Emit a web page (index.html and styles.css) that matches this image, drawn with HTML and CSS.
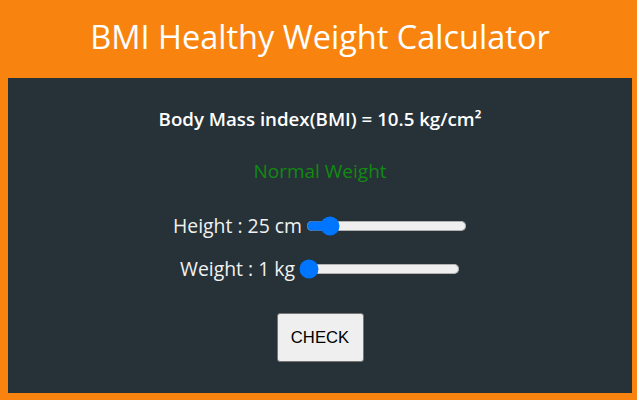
FILE: index.html
```html
<!DOCTYPE html>
<html>
<head>
<meta charset="utf-8">
<link rel="stylesheet" href="styles.css">
</head>
<body>
<div class="app">
  <header class="header">
    <h1 class="title">BMI Healthy Weight Calculator</h1>
  </header>
  <main class="panel">
    <p class="result">Body Mass index(BMI) = 10.5 kg/cm²</p>
    <p class="status">Normal Weight</p>
    <div class="row">
      <label class="label" for="h">Height : 25 cm</label>
      <input class="slider" id="h" type="range" min="0" max="250" value="25">
    </div>
    <div class="row">
      <label class="label" for="w">Weight : 1 kg</label>
      <input class="slider" id="w" type="range" min="0" max="200" value="1">
    </div>
    <button class="check">CHECK</button>
  </main>
</div>
</body>
</html>
```
FILE: styles.css
```css
html, body {
  margin: 0;
  padding: 0;
  background: #ffffff;
}
.app {
  width: 637px;
  height: 400px;
  box-sizing: border-box;
  background: #f8840f;
  padding: 0 5px 7px 8px;
  display: flex;
  flex-direction: column;
  font-family: "Open Sans", sans-serif;
}
.header {
  height: 78px;
  display: flex;
  align-items: center;
  justify-content: center;
}
.title {
  margin: 0;
  color: #ffffff;
  font-weight: 400;
  font-size: 32.5px;
  line-height: 1;
  padding-bottom: 4px;
}
.panel {
  flex: 1;
  background: #263238;
  display: flex;
  flex-direction: column;
  align-items: center;
  padding-top: 28px;
}
.result {
  margin: 0;
  color: #ffffff;
  font-weight: 600;
  font-size: 18.7px;
  line-height: 26px;
}
.status {
  margin: 26px 0 0;
  color: #118a11;
  font-size: 19px;
  line-height: 26px;
}
.row {
  display: flex;
  align-items: center;
  margin-top: 29px;
}
.row + .row {
  margin-top: 17px;
}
.label {
  color: #f1f1f1;
  font-size: 19.4px;
  line-height: 26px;
}
.slider {
  zoom: 1.25;
  margin: 0 0 0 3px;
}
.check {
  margin-top: 31px;
  width: 87px;
  height: 49px;
  font-family: Arial, "Liberation Sans", sans-serif;
  font-size: 16.67px;
  color: #000000;
  background: #efefef;
  border: 1px solid #767676;
  border-radius: 3px;
}
```
